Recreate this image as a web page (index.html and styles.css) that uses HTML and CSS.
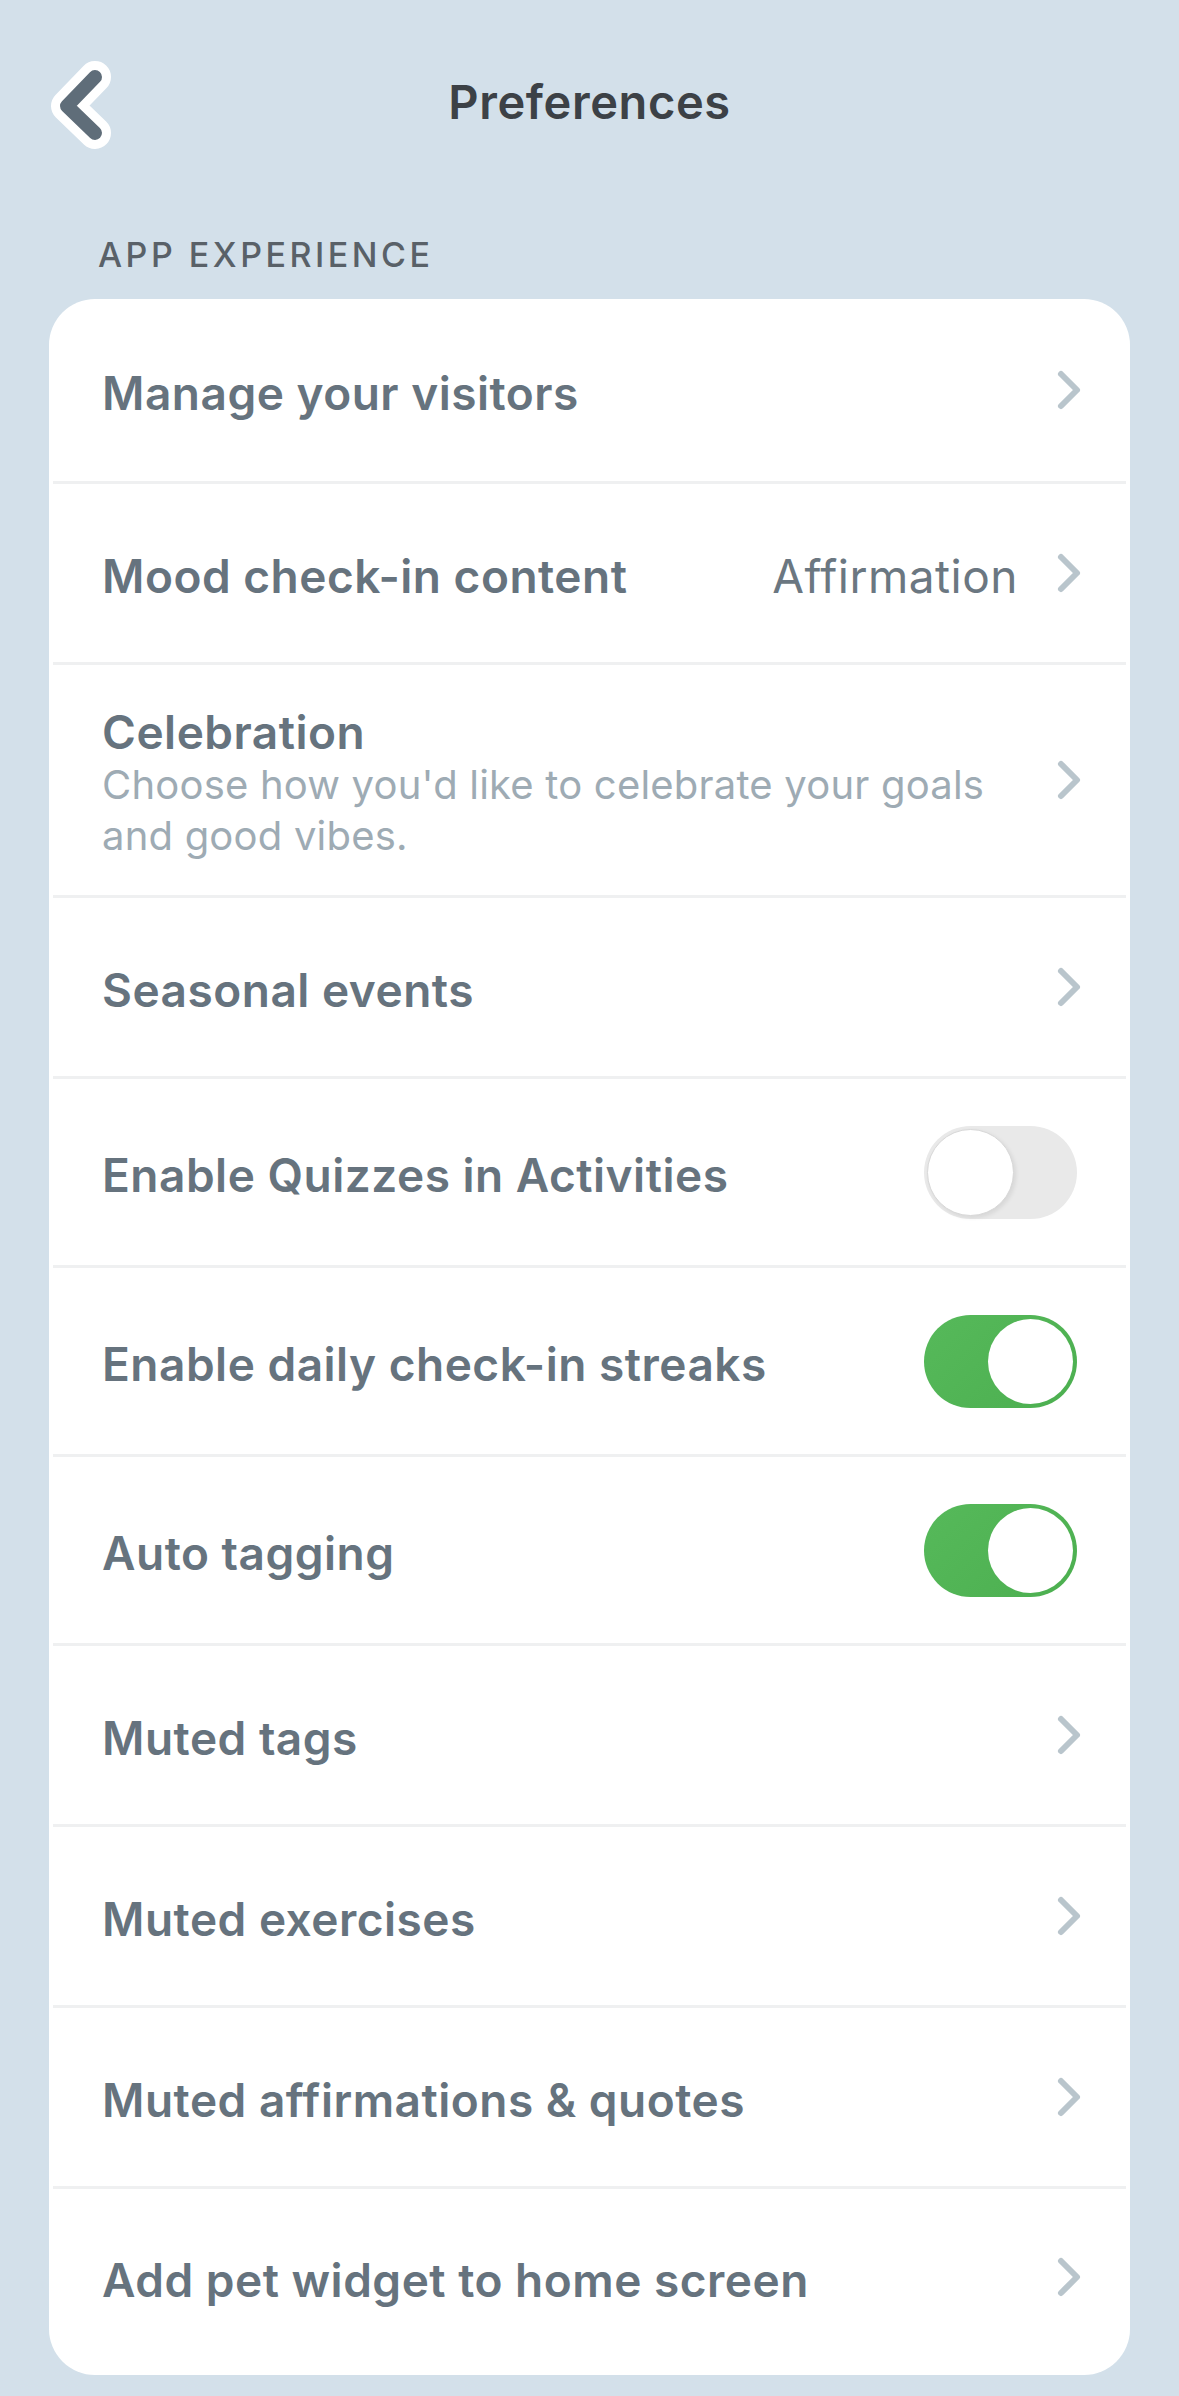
FILE: index.html
```html
<!DOCTYPE html>
<html lang="en">
<head>
    <meta charset="UTF-8">
    <meta name="viewport" content="width=device-width, initial-scale=1.0">
    <title>Preferences</title>
    <link rel="stylesheet" href="styles.css">
</head>
<body>
    <header class="top-bar">
        <button class="back-btn" aria-label="Back">
            <svg width="64" height="96" viewBox="0 0 64 96">
                <polyline points="46,24 18,53 46,80" fill="none" stroke="#fff" stroke-width="32" stroke-linecap="round" stroke-linejoin="round"/>
                <polyline points="46,24 18,53 46,80" fill="none" stroke="#5f6d79" stroke-width="14" stroke-linecap="round" stroke-linejoin="round"/>
            </svg>
        </button>
        <h1 class="page-title">Preferences</h1>
        <div></div>
    </header>

    <h2 class="section-label">APP EXPERIENCE</h2>

    <div class="card">
        <div class="row first">
            <span class="row-label">Manage your visitors</span>
            <span class="chevron"><svg width="26" height="42" viewBox="0 0 26 42"><polyline points="5,5 21,21 5,37" fill="none" stroke="#b9c5cc" stroke-width="6" stroke-linecap="round" stroke-linejoin="round"/></svg></span>
        </div>
        <div class="row">
            <span class="row-label">Mood check-in content</span>
            <span class="row-value">Affirmation</span>
            <span class="chevron"><svg width="26" height="42" viewBox="0 0 26 42"><polyline points="5,5 21,21 5,37" fill="none" stroke="#b9c5cc" stroke-width="6" stroke-linecap="round" stroke-linejoin="round"/></svg></span>
        </div>
        <div class="row tall">
            <div class="row-text">
                <span class="row-label">Celebration</span>
                <span class="row-sub">Choose how you'd like to celebrate your goals and good vibes.</span>
            </div>
            <span class="chevron"><svg width="26" height="42" viewBox="0 0 26 42"><polyline points="5,5 21,21 5,37" fill="none" stroke="#b9c5cc" stroke-width="6" stroke-linecap="round" stroke-linejoin="round"/></svg></span>
        </div>
        <div class="row">
            <span class="row-label">Seasonal events</span>
            <span class="chevron"><svg width="26" height="42" viewBox="0 0 26 42"><polyline points="5,5 21,21 5,37" fill="none" stroke="#b9c5cc" stroke-width="6" stroke-linecap="round" stroke-linejoin="round"/></svg></span>
        </div>
        <div class="row switch-row">
            <span class="row-label">Enable Quizzes in Activities</span>
            <span class="toggle"><span class="knob"></span></span>
        </div>
        <div class="row switch-row">
            <span class="row-label">Enable daily check-in streaks</span>
            <span class="toggle on"><span class="knob"></span></span>
        </div>
        <div class="row switch-row">
            <span class="row-label">Auto tagging</span>
            <span class="toggle on"><span class="knob"></span></span>
        </div>
        <div class="row">
            <span class="row-label">Muted tags</span>
            <span class="chevron"><svg width="26" height="42" viewBox="0 0 26 42"><polyline points="5,5 21,21 5,37" fill="none" stroke="#b9c5cc" stroke-width="6" stroke-linecap="round" stroke-linejoin="round"/></svg></span>
        </div>
        <div class="row">
            <span class="row-label">Muted exercises</span>
            <span class="chevron"><svg width="26" height="42" viewBox="0 0 26 42"><polyline points="5,5 21,21 5,37" fill="none" stroke="#b9c5cc" stroke-width="6" stroke-linecap="round" stroke-linejoin="round"/></svg></span>
        </div>
        <div class="row">
            <span class="row-label">Muted affirmations &amp; quotes</span>
            <span class="chevron"><svg width="26" height="42" viewBox="0 0 26 42"><polyline points="5,5 21,21 5,37" fill="none" stroke="#b9c5cc" stroke-width="6" stroke-linecap="round" stroke-linejoin="round"/></svg></span>
        </div>
        <div class="row last">
            <span class="row-label">Add pet widget to home screen</span>
            <span class="chevron"><svg width="26" height="42" viewBox="0 0 26 42"><polyline points="5,5 21,21 5,37" fill="none" stroke="#b9c5cc" stroke-width="6" stroke-linecap="round" stroke-linejoin="round"/></svg></span>
        </div>
    </div>
</body>
</html>
```

FILE: styles.css
```css
body {
    margin: 0;
    background-color: #d3e0ea;
    font-family: Inter, "Open Sans", sans-serif;
    color: #66737e;
}

.top-bar {
    display: grid;
    grid-template-columns: 1fr auto 1fr;
    align-items: center;
    height: 202px;
    padding: 0 49px;
}

.back-btn {
    background: none;
    border: none;
    padding: 0;
    width: 64px;
    height: 96px;
    cursor: pointer;
}

.page-title {
    margin: 0;
    font-size: 47px;
    font-weight: 600;
    color: #3c4146;
    letter-spacing: 0.6px;
}

.section-label {
    margin: 31px 0 0 98px;
    font-size: 34px;
    line-height: 44px;
    font-weight: 500;
    letter-spacing: 3.5px;
    color: #596168;
}

.card {
    margin: 22px 49px 0;
    background: white;
    border-radius: 46px;
    padding: 0 4px;
}

.row {
    display: flex;
    align-items: center;
    box-sizing: border-box;
    height: 181px;
    padding: 0 44px 0 49px;
    border-bottom: 3px solid #eff0f1;
}

.row.first {
    height: 185px;
}

.row.last {
    height: 186px;
    padding-bottom: 10px;
    border-bottom: none;
}

.row.tall {
    height: 233px;
}

.switch-row {
    height: 189px;
}

.row-label {
    flex: 1;
    padding-top: 5px;
    font-size: 46px;
    font-weight: 600;
    line-height: 54px;
    letter-spacing: 0.5px;
    color: #66737e;
}

.row-text .row-label {
    padding-top: 0;
}

.row-value {
    padding-top: 5px;
    font-size: 46px;
    font-weight: 400;
    letter-spacing: 0.5px;
    color: #6b7781;
    margin-right: 38px;
}

.row-text {
    flex: 1;
    display: flex;
    flex-direction: column;
    padding-top: 6px;
}

.row-sub {
    max-width: 930px;
    font-size: 40px;
    line-height: 51px;
    letter-spacing: 0.2px;
    color: #9eabb4;
}

.chevron {
    display: flex;
    width: 26px;
    height: 42px;
}

.toggle {
    position: relative;
    width: 153px;
    height: 93px;
    border-radius: 47px;
    background: #e9e9e9;
    margin-right: 5px;
}

.toggle .knob {
    position: absolute;
    top: 3px;
    left: 3px;
    width: 85px;
    height: 85px;
    border-radius: 50%;
    background: white;
    border: 1px solid #d8d8d8;
    box-shadow: 2px 2px 4px rgba(0, 0, 0, 0.08);
}

.toggle.on {
    background: linear-gradient(135deg, #56b95a, #4caf50);
}

.toggle.on .knob {
    top: 4px;
    left: 64px;
    border: none;
    box-shadow: none;
}
```
